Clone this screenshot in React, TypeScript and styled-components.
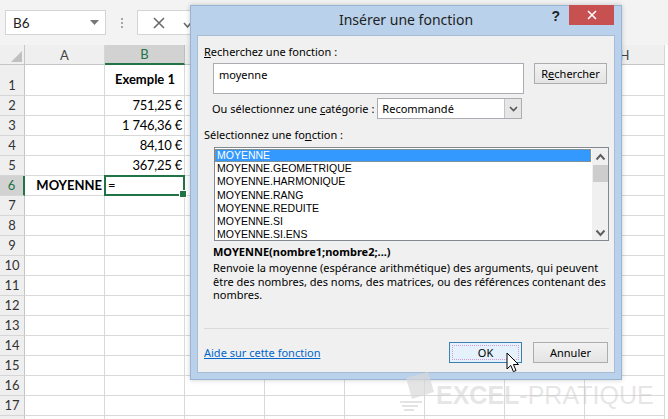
import React from "react";
import styled, { createGlobalStyle } from "styled-components";

const GlobalStyle = createGlobalStyle`
  * { box-sizing: border-box; }
  html, body { margin: 0; padding: 0; background: #ffffff; }
  body { width: 668px; height: 419px; overflow: hidden; }
`;

const excelFont = `"Lato", "Liberation Sans", sans-serif`;
const uiFont = `"Noto Sans", "Liberation Sans", sans-serif`;
const green = "#217346";
const gridLine = "#d9d9d9";
const headerBg = "#efefef";

type Align = "left" | "right" | "center";

interface CellData {
    text: string;
    bold?: boolean;
    align: Align;
    middle?: boolean;
}

const columns = ["A", "B", "C", "D", "E", "F", "G", "H"];
const rowCount = 18;

const cells: Record<string, CellData> = {
    "1B": { text: "Exemple 1", bold: true, align: "center", middle: true },
    "2B": { text: "751,25 €", align: "right" },
    "3B": { text: "1 746,36 €", align: "right" },
    "4B": { text: "84,10 €", align: "right" },
    "5B": { text: "367,25 €", align: "right" },
    "6A": { text: "MOYENNE", bold: true, align: "right" },
    "6B": { text: "=", align: "left" },
};

const functions = [
    "MOYENNE",
    "MOYENNE.GEOMETRIQUE",
    "MOYENNE.HARMONIQUE",
    "MOYENNE.RANG",
    "MOYENNE.REDUITE",
    "MOYENNE.SI",
    "MOYENNE.SI.ENS",
];

const App = () => {
    return (
        <Screen>
            <GlobalStyle />
            <FormulaBar>
                <NameBox>
                    B6
                    <svg width="9" height="5" viewBox="0 0 9 5">
                        <path d="M0 0 L9 0 L4.5 5 Z" fill="#777" />
                    </svg>
                </NameBox>
                <Grip>
                    <span />
                    <span />
                    <span />
                </Grip>
                <FxBox>
                    <svg width="14" height="14" viewBox="0 0 14 14">
                        <path
                            d="M2 2 L12 12 M12 2 L2 12"
                            stroke="#6a6a6a"
                            strokeWidth="1.6"
                        />
                    </svg>
                    <svg width="12" height="12" viewBox="0 0 12 12">
                        <path
                            d="M1 6 L4.5 10 L11 2"
                            stroke="#6a6a6a"
                            strokeWidth="1.6"
                            fill="none"
                        />
                    </svg>
                </FxBox>
            </FormulaBar>

            <Sheet>
                <Corner>
                    <svg width="11" height="11" viewBox="0 0 11 11">
                        <path d="M11 0 L11 11 L0 11 Z" fill="#c0c0c0" />
                    </svg>
                </Corner>
                {columns.map((col) => (
                    <ColHeader key={col} $selected={col === "B"}>
                        {col}
                    </ColHeader>
                ))}
                {Array.from({ length: rowCount }, (_, i) => i + 1).map(
                    (row) => (
                        <React.Fragment key={row}>
                            <RowHeader $selected={row === 6}>
                                {row < rowCount ? row : ""}
                            </RowHeader>
                            {columns.map((col) => {
                                const data = cells[`${row}${col}`];
                                return (
                                    <Cell
                                        key={col}
                                        $align={data?.align ?? "left"}
                                        $bold={data?.bold}
                                        $middle={data?.middle}
                                    >
                                        {data?.text}
                                        {row === 6 && col === "B" && (
                                            <ActiveFrame />
                                        )}
                                    </Cell>
                                );
                            })}
                        </React.Fragment>
                    )
                )}
            </Sheet>

            <Dialog>
                <TitleBar>
                    <span />
                    <Title>Insérer une fonction</Title>
                    <TitleButtons>
                        <Help>?</Help>
                        <Close>
                            <svg width="10" height="10" viewBox="0 0 10 10">
                                <path
                                    d="M1 1 L9 9 M9 1 L1 9"
                                    stroke="#fff"
                                    strokeWidth="1.6"
                                />
                            </svg>
                        </Close>
                    </TitleButtons>
                </TitleBar>

                <Panel>
                    <Label>
                        <u>R</u>echerchez une fonction :
                    </Label>
                    <SearchRow>
                        <SearchInput>moyenne</SearchInput>
                        <Button $width={73}>
                            R<u>e</u>chercher
                        </Button>
                    </SearchRow>

                    <CategoryRow>
                        <span>
                            Ou sélectionnez une <u>c</u>atégorie :
                        </span>
                        <Select>
                            <span>Recommandé</span>
                            <SelectArrow>
                                <svg width="9" height="6" viewBox="0 0 9 6">
                                    <path
                                        d="M1 1 L4.5 4.5 L8 1"
                                        stroke="#555"
                                        strokeWidth="1.6"
                                        fill="none"
                                    />
                                </svg>
                            </SelectArrow>
                        </Select>
                    </CategoryRow>

                    <Label $top={8}>
                        Sélectionnez une fo<u>n</u>ction :
                    </Label>
                    <ListBox>
                        <ListItems>
                            {functions.map((name, i) => (
                                <ListItem key={name} $selected={i === 0}>
                                    {name}
                                </ListItem>
                            ))}
                        </ListItems>
                        <ScrollBar>
                            <svg width="11" height="8" viewBox="0 0 11 8">
                                <path
                                    d="M1.5 6.5 L5.5 2 L9.5 6.5"
                                    stroke="#606060"
                                    strokeWidth="2"
                                    fill="none"
                                />
                            </svg>
                            <Thumb />
                            <Spacer />
                            <svg width="11" height="8" viewBox="0 0 11 8">
                                <path
                                    d="M1.5 1.5 L5.5 6 L9.5 1.5"
                                    stroke="#606060"
                                    strokeWidth="2"
                                    fill="none"
                                />
                            </svg>
                        </ScrollBar>
                    </ListBox>

                    <Syntax>MOYENNE(nombre1;nombre2;...)</Syntax>
                    <Description>
                        Renvoie la moyenne (espérance arithmétique) des
                        arguments, qui peuvent
                        <br />
                        être des nombres, des noms, des matrices, ou des
                        références contenant des
                        <br />
                        nombres.
                    </Description>

                    <Separator />
                    <Footer>
                        <HelpLink>Aide sur cette fonction</HelpLink>
                        <FooterButtons>
                            <Button $width={73} $default>
                                OK
                            </Button>
                            <Button $width={75}>Annuler</Button>
                        </FooterButtons>
                    </Footer>
                </Panel>
            </Dialog>

            <Watermark>
                <svg width="38" height="40" viewBox="0 0 38 40">
                    <path
                        d="M8 6 L30 0 L36 20 L14 27 Z"
                        fill="#d8d8d8"
                        opacity="0.7"
                    />
                    <path
                        d="M2 30 H24 M4 34 H20 M6 38 H16"
                        stroke="#d8d8d8"
                        strokeWidth="2"
                        opacity="0.7"
                    />
                </svg>
                <WatermarkText>
                    <b>EXCEL</b>-PRATIQUE
                </WatermarkText>
            </Watermark>

            <Cursor width="14" height="22" viewBox="0 0 14 22">
                <path
                    d="M1 1 L1 17 L4.8 13.4 L7.4 19.6 L10 18.5 L7.4 12.5 L12.5 12.5 Z"
                    fill="#fff"
                    stroke="#000"
                    strokeWidth="1"
                    strokeLinejoin="miter"
                />
            </Cursor>
        </Screen>
    );
};

const Screen = styled.div`
    position: relative;

    display: flex;
    flex-direction: column;

    width: 668px;
    height: 419px;
    overflow: hidden;

    font-family: ${excelFont};
    background: #fff;
`;

const FormulaBar = styled.div`
    flex: none;

    display: flex;
    align-items: flex-start;

    height: 45px;
    padding: 10px 0 0 5px;

    background: #f3f3f3;
`;

const NameBox = styled.div`
    display: flex;
    justify-content: space-between;
    align-items: center;

    width: 101px;
    height: 25px;
    padding: 0 6px 0 7px;

    font-size: 13.5px;
    color: #222;

    background: #fff;
    border: 1px solid #d4d4d4;
`;

const Grip = styled.div`
    display: flex;
    flex-direction: column;
    justify-content: center;
    align-items: center;
    gap: 2px;

    width: 31px;
    height: 25px;

    & span {
        width: 2px;
        height: 2px;
        background: #a6a6a6;
    }
`;

const FxBox = styled.div`
    display: flex;
    align-items: center;
    gap: 17px;

    width: 80px;
    height: 25px;
    padding-left: 14px;

    background: #fff;
    border: 1px solid #d4d4d4;
`;

const Sheet = styled.div`
    display: grid;
    grid-template-columns: 25px repeat(8, 80px) 3px;
    grid-template-rows: 20px 31px repeat(17, 20px);
`;

const Corner = styled.div`
    display: flex;
    justify-content: flex-end;
    align-items: flex-end;

    padding: 0 2px 2px 0;

    background: ${headerBg};
    border-right: 1px solid #c6c6c6;
    border-bottom: 1px solid #c6c6c6;
`;

const ColHeader = styled.div<{ $selected?: boolean }>`
    display: flex;
    justify-content: center;
    align-items: center;

    font-size: 13px;
    color: ${(p) => (p.$selected ? green : "#444")};

    background: ${(p) => (p.$selected ? "#d2d2d2" : headerBg)};
    border-right: 1px solid ${(p) => (p.$selected ? "#bdbdbd" : "#d6d6d6")};
    border-bottom: ${(p) =>
        p.$selected ? `2px solid ${green}` : "1px solid #c6c6c6"};
`;

const RowHeader = styled.div<{ $selected?: boolean }>`
    grid-column: 1;

    display: flex;
    justify-content: center;
    align-items: flex-end;

    padding-bottom: 1px;

    font-size: 13px;
    line-height: 17px;
    color: ${(p) => (p.$selected ? green : "#333")};

    background: ${(p) => (p.$selected ? "#d2d2d2" : headerBg)};
    border-right: ${(p) =>
        p.$selected ? `2px solid ${green}` : "1px solid #c6c6c6"};
    border-bottom: 1px solid #d6d6d6;
`;

const Cell = styled.div<{ $align: Align; $bold?: boolean; $middle?: boolean }>`
    position: relative;

    display: flex;
    align-items: ${(p) => (p.$middle ? "center" : "flex-end")};
    justify-content: ${(p) =>
        p.$align === "right"
            ? "flex-end"
            : p.$align === "center"
            ? "center"
            : "flex-start"};

    padding: 0 2px 1px 3px;

    font-size: 13px;
    font-weight: ${(p) => (p.$bold ? 700 : 400)};
    letter-spacing: ${(p) => (p.$bold ? "0" : "-0.25px")};
    line-height: 17px;
    white-space: nowrap;
    color: #000;

    border-right: 1px solid ${gridLine};
    border-bottom: 1px solid ${gridLine};
`;

const ActiveFrame = styled.div`
    position: absolute;
    left: -1px;
    top: -1px;
    right: -1px;
    bottom: -1px;
    z-index: 2;

    border: 2px solid ${green};

    &::after {
        content: "";
        position: absolute;
        right: -4px;
        bottom: -4px;

        width: 6px;
        height: 6px;

        background: ${green};
        border: 1px solid #fff;
    }
`;

const Dialog = styled.div`
    position: absolute;
    left: 190px;
    top: 5px;
    z-index: 5;

    display: flex;
    flex-direction: column;

    width: 432px;
    height: 375px;
    padding: 0 6px 6px 6px;

    font-family: ${uiFont};
    font-size: 11px;
    color: #000;

    background: #b9d1ea;
    border: 1px solid #97b4d3;
    box-shadow: 0 0 5px rgba(0, 0, 0, 0.2);
`;

const TitleBar = styled.div`
    flex: none;

    display: grid;
    grid-template-columns: 1fr auto 1fr;
    align-items: start;

    height: 29px;
`;

const Title = styled.div`
    padding-top: 5px;

    font-size: 14px;
    line-height: 18px;
    color: #1e1e1e;
`;

const TitleButtons = styled.div`
    display: flex;
    justify-content: flex-end;
    align-items: flex-start;
    gap: 9px;
`;

const Help = styled.span`
    padding-top: 2px;

    font-family: "Liberation Sans", sans-serif;
    font-size: 14px;
    font-weight: 700;
    color: #222;
`;

const Close = styled.div`
    display: flex;
    justify-content: center;
    align-items: center;

    width: 45px;
    height: 20px;
    margin-top: -1px;
    margin-right: 1px;

    background: #c75050;
`;

const Panel = styled.div`
    flex: 1;

    display: flex;
    flex-direction: column;

    padding: 8px 5px 9px 6px;

    background: #f0f0f0;
    border: 1px solid #a7bdd5;
`;

const Label = styled.div<{ $top?: number }>`
    margin-top: ${(p) => p.$top ?? 0}px;

    line-height: 15px;
`;

const SearchRow = styled.div`
    display: flex;
    align-items: flex-start;
    gap: 10px;

    margin-top: 4px;
    padding-left: 9px;
`;

const SearchInput = styled.div`
    width: 311px;
    height: 31px;
    padding: 3px 5px;

    line-height: 15px;

    background: #fff;
    border: 1px solid #abadb3;
`;

const Button = styled.div<{ $width: number; $default?: boolean }>`
    display: flex;
    justify-content: center;
    align-items: center;

    width: ${(p) => p.$width}px;
    height: 21px;

    background: ${(p) =>
        p.$default ? "#e5f1fb" : "linear-gradient(#f2f2f2, #e4e4e4)"};
    border: 1px solid ${(p) => (p.$default ? "#3c7fb1" : "#acacac")};
    outline: ${(p) => (p.$default ? "1px dotted #d39ad9" : "none")};
    outline-offset: -4px;
`;

const CategoryRow = styled.div`
    display: flex;
    align-items: center;
    gap: 3px;

    height: 21px;
    margin-top: 4px;
    padding-left: 8px;
`;

const Select = styled.div`
    display: flex;
    justify-content: space-between;
    align-items: stretch;

    width: 145px;
    height: 21px;
    padding-left: 4px;

    background: #fff;
    border: 1px solid #abadb3;

    & span {
        align-self: center;
    }
`;

const SelectArrow = styled.div`
    display: flex;
    justify-content: center;
    align-items: center;

    width: 17px;

    background: #e6e6e6;
    border-left: 1px solid #c4c4c4;
`;

const ListBox = styled.div`
    display: flex;

    width: 395px;
    height: 94px;
    margin: 5px 0 0 10px;

    background: #fff;
    border: 1px solid #828790;
`;

const ListItems = styled.div`
    flex: 1;

    padding: 1px 1px 0 0;

    font-family: "Liberation Sans", sans-serif;
    font-size: 10.5px;
`;

const ListItem = styled.div<{ $selected?: boolean }>`
    height: 13.2px;
    padding-left: 2px;

    line-height: 12px;
    color: ${(p) => (p.$selected ? "#fff" : "#000")};

    background: ${(p) => (p.$selected ? "#3399ff" : "transparent")};
    outline: ${(p) => (p.$selected ? "1px dotted #c58a3a" : "none")};
    outline-offset: -1px;
`;

const ScrollBar = styled.div`
    display: flex;
    flex-direction: column;
    align-items: center;

    width: 16px;
    padding: 5px 0 3px;

    background: #f0f0f0;
`;

const Thumb = styled.div`
    width: 15px;
    height: 17px;
    margin-top: 4px;

    background: #cdcdcd;
`;

const Spacer = styled.div`
    flex: 1;
`;

const Syntax = styled.div`
    margin: 3px 0 0 9px;

    font-weight: 700;
    line-height: 15px;
`;

const Description = styled.div`
    margin: 2px 0 0 9px;

    line-height: 13.5px;
    white-space: nowrap;
`;

const Separator = styled.div`
    margin-top: auto;

    height: 1px;
    background: #d9d9d9;
`;

const Footer = styled.div`
    display: flex;
    justify-content: space-between;
    align-items: center;

    margin-top: 13px;
`;

const HelpLink = styled.span`
    color: #0066cc;
    text-decoration: underline;
`;

const FooterButtons = styled.div`
    display: flex;
    gap: 11px;

    padding-right: 1px;
`;

const Watermark = styled.div`
    position: absolute;
    left: 398px;
    top: 372px;
    z-index: 6;

    display: flex;
    align-items: flex-end;

    pointer-events: none;
`;

const WatermarkText = styled.div`
    margin-bottom: 4px;

    font-family: "Liberation Sans", sans-serif;
    font-size: 25px;
    line-height: 26px;
    color: rgba(200, 200, 200, 0.45);

    & b {
        font-weight: 700;
    }
`;

const Cursor = styled.svg`
    position: absolute;
    left: 506px;
    top: 352px;
    z-index: 7;
`;

export default App;
